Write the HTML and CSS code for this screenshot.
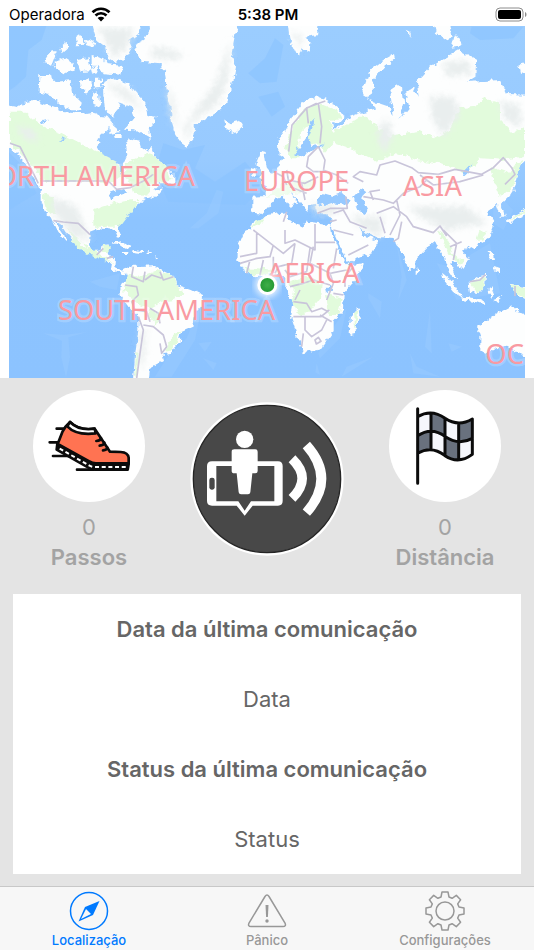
FILE: index.html
```html
<!DOCTYPE html>
<html lang="pt-BR">
<head>
    <meta charset="UTF-8">
    <meta name="viewport" content="width=device-width, initial-scale=1.0">
    <title>Localização</title>
    <link rel="stylesheet" href="styles.css">
</head>
<body>
    <header class="status-bar">
        <div class="carrier">
            <span>Operadora</span>
            <svg class="wifi" viewBox="0 0 20 15" aria-hidden="true">
                <path d="M1.5 5.2a12.2 12.2 0 0 1 17 0M4.5 8.5a7.8 7.8 0 0 1 11 0" fill="none" stroke="#000" stroke-width="2.7"/>
                <path d="M6.6 11a4.9 4.9 0 0 1 6.8 0L10 14.5z"/>
            </svg>
        </div>
        <time class="clock">5:38 PM</time>
        <svg class="battery" viewBox="0 0 32 15" aria-hidden="true">
            <rect x="1" y="1" width="27" height="13" rx="4" fill="none" stroke="#8c8c8c"/>
            <rect x="3" y="3" width="23" height="9" rx="2"/>
            <path d="M30 5c2 .7 2 4.300 0 5z" fill="#8c8c8c"/>
        </svg>
    </header>

    <main class="content">
        <section class="map-area" aria-label="Mapa">
            <svg class="map" viewBox="27 78 1548 1056">
                <defs>
                    <filter id="coast" x="0" y="0" width="100%" height="100%">
                        <feTurbulence type="fractalNoise" baseFrequency="0.06" numOctaves="2" seed="4" result="noise"/>
                        <feDisplacementMap in="SourceGraphic" in2="noise" scale="20" xChannelSelector="R" yChannelSelector="G"/>
                    </filter>
                    <filter id="soft"><feGaussianBlur stdDeviation="10"/></filter>
                    <linearGradient id="sea" x1="0" y1="0" x2="0" y2="1">
                        <stop offset="0" stop-color="#9bcdff"/>
                        <stop offset="0.38" stop-color="#98caff"/>
                        <stop offset="0.55" stop-color="#8dc4ff"/>
                        <stop offset="1" stop-color="#8cc3ff"/>
                    </linearGradient>
                    <radialGradient id="pin">
                        <stop offset="0" stop-color="#3fae49"/>
                        <stop offset="1" stop-color="#259a35"/>
                    </radialGradient>
                </defs>
                <rect x="27" y="78" width="1548" height="1056" fill="url(#sea)"/>

                <!-- sea depth -->
                <g class="deep">
                    <path d="M0 60H145L125 120 85 150 78 230 45 260 0 290zM490 430l60 20 65-15-30 70 60 40 90-60 60 70-60 60-230-10-40-90zM745 220l50-45 30-60 25 20-20 110-50 5zM775 290l60-15 20 45-40 30zM1415 80h155l-30 35-100 5-30-20zM0 430l60 60 50 90-100 60z"/>
                </g>
                <g class="shallow">
                    <path d="M130 1000l60 5 70-8-55 15 5 60-12 60-14-60 2-50zM270 845l90-25-10 50-50-10zM570 685l50-45 30-70 20 5-15 65-60 45zM595 1030l40-5-20 30zM1190 730l30 110-25 60 10-70zM1105 880l40 25-5 50-35-60zM1230 1060l20 40 70 30-80-10zM1290 930l5 130-20-20zM1345 1030l40 10-30 15zM950 1090l10 35-14-8zM640 1110l-30-35 40 15zM1040 1100l80-30-95 60z"/>
                    <path d="M500 1075l60-60 50-120-25 125-70 110h-50zM955 1060l50-85 35-50-20 90-60 60zM1310 790l40 10 120-70 30 150-130 20zM1480 570l60 60-30 60-30-20z"/>
                </g>

                <g filter="url(#coast)">
                    <g class="land">
                        <!-- North and Central America -->
                        <path d="M10 315L60 322 75 303 105 300 130 310 160 320 185 335 245 342 280 335 300 348 322 350 340 372 322 388 300 408 290 440 302 465 332 482 355 492 362 530 370 492 380 470 376 440 386 415 420 422 425 440 445 455 453 440 466 472 492 495 516 515 516 548 480 550 460 572 490 565 470 588 425 602 402 622 382 650 352 675 364 710 354 713 345 690 300 685 272 695 270 735 280 753 305 750 308 735 326 733 320 760 345 775 343 800 365 815 382 806 375 828 345 812 320 782 290 767 240 750 225 730 200 700 180 668 165 664 202 720 196 722 172 690 155 655 135 635 122 610 122 570 108 542 85 510 60 470 10 425z"/>
                        <!-- South America -->
                        <path d="M375 808L400 792 415 802 465 798 482 810 522 828 530 855 575 870 612 888 610 912 585 940 580 980 546 995 540 1020 512 1060 490 1062 495 1080 450 1105 445 1150H398L405 1070 415 990 415 950 385 920 358 880 365 850 383 840z"/>
                        <!-- Greenland and Iceland -->
                        <path d="M448 60L450 90 430 122 403 135 410 160 425 185 480 190 495 215 500 270 512 320 516 370 526 405 545 430 560 440 580 415 582 378 610 362 645 342 682 310 688 280 700 240 708 200 695 160 714 60z"/>
                        <path d="M672 360l18 10 30-8 12 16-27 24-25-12z"/>
                        <!-- Arctic archipelago -->
                        <path d="M272 60l18 60 26 20 4 32 25 14 30-10 20-36-10-20 36-24V60zM118 225l27 0 25 20 42-4 4 38 30 30-6 22-26 0-34-20-32-26-32-8zM130 190l22-36 18 0-15 40zM163 185l42-12 20 32-34 18-22-12zM228 108l12-8 16 34-26 2zM258 115l28 14-6 12-20-6zM182 140l18-16 2 24-14 12zM230 178l36-6 6 42-30 2zM275 168l40 10 6 14 46 6-6 26-50-4-12-20-24-4zM243 245l26-8 6 34-14 10-16-18zM283 236l24 0-6 28-20 2zM276 280l20-6 6 50-22-10zM272 206l18-10 6 20-20 6z"/>
                        <path d="M308 250L340 235 385 250 410 280 436 310 442 345 467 350 460 376 446 382 452 418 430 405 402 388 375 386 402 352 396 322 360 308 342 350 315 330 310 285zM330 368l32 28-34 6zM345 402l20 0 0 12-18 0zM495 528l25-10 0 36-28-4z"/>
                        <!-- Caribbean -->
                        <path d="M334 728l30-4 32 20-20 2-16-12zM398 750l34 4-8 8-28-4zM366 756h16v6h-16zM440 754h12v5h-12zM466 762l8 20-6 0z"/>
                        <!-- Europe and Asia -->
                        <path d="M833 420L851 395 881 345 911 305 951 288 981 300 1016 325 1034 350 1016 370 996 367 1001 390 1028 376 1046 352 1091 335 1131 325 1108 300 1161 318 1181 345 1171 280 1191 250 1206 260 1213 312 1200 356 1226 324 1216 280 1241 262 1256 290 1251 245 1291 200 1331 175 1376 150 1429 180 1426 230 1401 246 1501 240 1521 282 1600 285V465L1560 498 1546 560 1526 592 1505 612 1516 650 1502 650 1490 615 1461 635 1482 672 1466 715 1426 737 1388 752 1407 780 1386 808 1366 785 1351 790 1361 820 1374 842 1350 826 1331 772 1316 746 1306 725 1281 745 1246 780 1246 800 1233 814 1216 785 1206 755 1186 735 1181 714 1141 712 1101 702 1076 680 1091 706 1121 716 1134 728 1116 760 1046 786 1034 770 1001 696 991 672 996 655 985 640 951 640 948 612 925 615 918 632 897 606 872 580 890 605 872 622 848 588 826 594 806 622 785 645 757 640 757 590 797 588 797 560 780 546 806 526 830 510 846 480 858 478 836 462z"/>
                        <!-- Africa -->
                        <path d="M760 665L790 655 801 645 861 636 866 662 906 678 921 665 991 673 996 702 1016 750 1036 785 1048 797 1089 790 1071 835 1031 880 1029 930 1001 960 1001 990 961 1048 911 1060 896 1020 873 950 881 910 856 870 856 835 831 820 801 826 765 832 735 815 712 780 715 735 730 700 750 690z"/>
                        <path d="M1046 1000L1050 952 1076 925 1081 945 1062 1002 1050 1005z"/>
                        <!-- British Isles -->
                        <path d="M766 492l14-34 14 4 6 40 14 16-10 16-26 4 8-22zM752 512l14-8 2 20-14 4z"/>
                        <!-- Arctic islands -->
                        <path d="M1182 162L1150 180 1111 210 1089 270 1101 298 1118 272 1121 236 1150 202 1185 176zM863 70l6 50 26 54 10-30 24 14 2-30-12-18 32-4 6-36zM1300 70l8 28 34 26 14-20-6-34zM1365 102l22 34-32 4zM1575 186l-20 10 6 26 20-4zM1220 92l12 6 0 12z"/>
                        <!-- South East Asia and Oceania -->
                        <path d="M1406 850L1440 828 1458 824 1456 856 1438 880 1410 876zM1326 818l24 20 40 54-26-14-34-44zM1384 890l40 4 34 12-4 6-66-12zM1466 864l16-8-8 16 6 14-8 4-6-14zM1526 852l24 6 40 4v40l-30-14zM1466 754l12 2 4 22-10-2zM1482 798l18 6 0 16-16-6zM1247 802l8 16-8 4zM1518 664l30-22 40-22v20l-46 22-16 10zM1480 900l26-10-16 16z"/>
                        <path d="M1431 980L1491 940 1536 915 1556 940 1600 950V1085L1560 1062 1541 1050 1521 1040 1491 1045 1456 1064 1441 1055 1441 1010z"/>
                    </g>

                    <!-- vegetation -->
                    <g class="green">
                        <path d="M30 335L75 335 120 375 180 400 260 440 350 485 362 530 330 545 130 545 100 500 60 460 30 425zM380 490L425 470 450 460 500 500 515 540 455 555 440 590 400 580 385 540 370 530z"/>
                        <path d="M280 630L340 610 400 600 420 600 360 680 280 680zM125 580l30 10 15 55-30-10zM200 680l50 55 30 15 60 40-70-25-40-20zM310 735h16v18h-16z"/>
                        <path d="M385 815L420 830 470 810 520 828 530 855 560 880 520 900 485 905 450 925 400 905 375 870 365 880 375 845zM450 925l30 20-10 30-30-30zM520 1000l25-10-30 60-20 5zM408 1060l8 0-6 70-8 0z"/>
                        <path d="M855 450L870 400 900 340 930 320 960 310 1010 330 1025 355 990 360 1000 395 1050 370 1090 345 1125 375 1170 410 1230 400 1260 395 1300 415 1350 390 1375 325 1425 320 1450 295 1500 310 1500 360 1540 400 1575 380V470L1530 480 1440 475 1400 520 1320 490 1250 480 1190 460 1130 485 1060 450 1000 430 975 455 955 430 918 435 930 370 900 400 895 475 875 475zM1470 500l60 20 20-30 20-10-30 80-40 30-20-50z"/>
                        <path d="M1310 690l25 15 25 55 30 25-6 10-34-30-20-40zM1440 690l22 5-12 24-20 0zM1410 850l44-20 0 30-20 20zM1530 855l50 10v30l-30-15zM1520 665l60-40v12z"/>
                        <path d="M730 800l40 5 50 5-10 12-60 5zM865 850l20-10 40-15 40 30-5 40-35 45-30 5-20-45 10-30zM975 885l50 10-10 50-30 0zM1062 940l14-10-10 60zM755 680l15-20 25-5-10 15z"/>
                        <path d="M800 590l50-40 80-10 20 20-50 20z" opacity="0.5"/>
                    </g>

                    <!-- mountains -->
                    <g class="relief">
                        <path d="M290 85h110l-20 60-40 30-20-50zM460 140l90 20-20 20-80-10zM690 120l-5 110-30 80-80 55-15 60-10-40 40-60 60-80zM500 250l25 60 5 80-15-40zM330 245l60 30 40 60-40-30-60-40zM45 375l60 20 10 30-40-10z"/>
                        <path d="M1290 290l70 0 20 50-50 70-35-60zM1330 190l70-10 20 40-80 10zM1500 300l60 20 5 60-50-20zM1220 620l180 0 60 50-120 20-80-40zM1050 650l100 0-10 60-60-30zM150 590l80 30 40 100-50-10-60-70zM420 1000l20-10-10 110-12 0zM930 610l90 10-10 20-60 0zM875 90l30 20-5 40zM1160 350l20 60-30 50-20-60z"/>
                    </g>
                </g>

                <!-- inland seas and lakes -->
                <g class="water" filter="url(#coast)">
                    <path d="M950 605l20-25 30 8 25-10 24 22-10 14-40-4-25 8zM1060 590l22-24 18 8-14 24 16 34-12 10-14-12zM920 412l10-48 14 0-18 50 8 24 44-6-38 16-20 14-18 10-20-6zM1000 365l22 10-14 14zM1030 355l14-22 6 16zM1395 512l22-22-8 24-18 16zM325 578l35-12 22 12-30 10-18 14zM980 862l12-8 6 16-14 10zM170 425l26-12-6 12zM120 365l24-6-10 12z"/>
                </g>

                <!-- borders -->
                <g class="borders">
                    <path d="M122 543H325l25 25 40-5 40-20 30-20M160 662l30 4 45 4 35 34M30 430l30 10 25 50 30 60M290 765l20-20M320 775l20-5"/>
                    <path d="M400 800l-5 30 35 15 5-30M375 855l35 5 5 25-20 20 10 25 35 5 10 30M435 840l20-15 30 10M480 815l10 25 30-10M415 950l15 40-10 70-10 75M430 975l30 5 30 25 10 35-15 20-5-30M450 925l25 15 5 30"/>
                    <path d="M866 455l10-80 45-52 40-15 15-5M925 370l-5-45 30-15M955 310l10 70-5 50M925 470l30-30 20 40-5 35-30 0-20-15zM830 520l20 10 10 25M860 510l5 30 50 10 40-20M870 560l50 20M905 550l10 50M970 510l40 15 35 25"/>
                    <path d="M1090 545l-30-15 20-15 50 10 10-30 45-12 50 20 20 15 60 5 50-15 80 15 35-20 30-30 25 30 10 20-30 30M1260 525l40 30 80-10 70-20M1090 590l60 10 30 10 30-30 50-20 20-20M1120 600l-10-25 30-5M1190 600l10 45-30 60M1130 640l50-20 40 30 20 30 60 18 20-20 20 30M1140 650l15 50M1205 665l-10 50-15 10M1330 690l40 40-10 50M1350 740l35-15"/>
                    <path d="M952 640l40-15 50 0-5-35M1000 640l30-10 20 35 50 20M1000 690l60 15M1045 765l60-30M990 665l20-5"/>
                    <path d="M760 690l90 70 35-30M850 665l10-30M855 690l0 40 30-10 60 30V672M945 727h60M770 700l0 60-50 10M720 790l50-15 40-5 10-35M820 770l0 50M790 780l-10 45M750 780l-10 40M885 730l-10 60-40 10-10 20M930 745l-10 70-50 15-15-20M940 740l-10 50 60 30 50-10M1010 745l-10 60M990 820l10 30-20 50M1060 800l-25 30 0 30M870 860l40-10 30-10 50 15M900 870l-15 30M880 905l40 5 15 25 30-10 20 10M880 950l83 0 25-20M915 950v40l20 20 30-20 15-30M910 1000l-5 40M945 1020l10-8 8 12-14 8zM960 945l35 20M1000 880l30 5"/>
                    <path d="M1410 845l30-5 16-16M1545 858l0 30"/>
                </g>

                <g class="labels">
                    <text x="585" y="558" text-anchor="end">NORTH AMERICA</text>
                    <text x="732" y="572">EUROPE</text>
                    <text x="1208" y="588">ASIA</text>
                    <text x="801" y="850">AFRICA</text>
                    <text x="174" y="961">SOUTH AMERICA</text>
                    <text x="1456" y="1091">OC</text>
                </g>

                <circle cx="802" cy="855" r="36" fill="#fff" opacity="0.8" filter="url(#soft)"/>
                <circle cx="802" cy="855" r="30" fill="#fff"/>
                <circle cx="802" cy="855" r="21" fill="url(#pin)"/>
            </svg>
        </section>

        <section class="stats">
            <div class="stat">
                <svg class="stat-icon" viewBox="39 30 336 336" aria-hidden="true">
                    <circle cx="207" cy="198" r="168" fill="#fff"/>
                    <g stroke="#0b0b0b" stroke-width="8" stroke-linecap="round" stroke-linejoin="round">
                        <path d="M110 146h22M89 187h28M99 228h52M171 269h50" fill="none"/>
                        <path d="M112 191l-2 18 98 55q8 5 18 5h97l3-17H226z" fill="#0b0b0b"/>
                        <path d="M150 126q-14 12-22 28l-15 38 95 52q8 6 20 6h98v-17q-2-16-24-17l-32-1-46-69q-46 8-74-20z" fill="#ff7352"/>
                        <path d="M150 126l-8 13q26 28 85 21l-3-14q-48 7-74-20z" fill="#fff"/>
                        <path d="M229 183q13-1 14-9M239 197q13-1 14-9M249 211q12-1 13-8" fill="none"/>
                    </g>
                    <path d="M119 206l88 50q8 5 19 5h96" fill="none" stroke="#fff" stroke-width="6" stroke-dasharray="12 8"/>
                </svg>
                <span class="stat-value">0</span>
                <span class="stat-label">Passos</span>
            </div>

            <svg class="logo" viewBox="30 38 462 462" aria-hidden="true">
                <circle cx="261" cy="269" r="230" fill="#fff"/>
                <circle cx="261" cy="269" r="221" fill="#484848" stroke="#252525" stroke-width="4"/>
                <path fill-rule="evenodd" fill="#fff" d="M96 216h198q14 0 14 14v105q0 14-14 14h-76l-24 30-24-30H96q-15 0-15-14V230q0-14 15-14zM109 230v106h66l19 28 19-28h70V230z"/>
                <rect x="88" y="265" width="16" height="36" rx="7" fill="#484848"/>
                <circle cx="194" cy="150" r="26" fill="#fff"/>
                <path d="M163 180h63q7 0 7 7v58q0 7-7 7h-9l-6 57q-1 6-7 6h-21q-6 0-7-6l-6-57h-7q-8 0-8-7v-58q0-7 8-7z" fill="#fff"/>
                <path d="M336 208q61 59 0 119M379 167q90 101 0 203" fill="none" stroke="#fff" stroke-width="29"/>
            </svg>

            <div class="stat">
                <svg class="stat-icon" viewBox="57 30 336 336" aria-hidden="true">
                    <circle cx="225" cy="198" r="168" fill="#fff"/>
                    <path d="M143 110q42-24 82 5 40 27 82 2v106q-42 31-82 4-40-32-82-7z" fill="#f6f7fc"/>
                    <path d="M183 101q20 0 42 14v54q-20-14-42-14zM266 129q22 0 41-12v58q-20 10-41 10zM143 167q20-12 40-12v51q-20 0-40 14zM225 169q20 14 41 16v54q-20 0-41-12z" fill="#69717e"/>
                    <g fill="none" stroke="#0b0b0b" stroke-width="9" stroke-linecap="round" stroke-linejoin="round">
                        <path d="M143 86v224M143 110q42-24 82 5 40 27 82 2v106q-42 31-82 4-40-32-82-7M143 167q42-28 82 2 40 29 82 6M183 101v105M225 115v112M266 129v110"/>
                    </g>
                </svg>
                <span class="stat-value">0</span>
                <span class="stat-label">Distância</span>
            </div>
        </section>

        <dl class="card">
            <dt>Data da última comunicação</dt>
            <dd>Data</dd>
            <dt>Status da última comunicação</dt>
            <dd>Status</dd>
        </dl>
    </main>

    <nav class="tab-bar">
        <a class="tab active" href="#localizacao">
            <svg viewBox="0 0 40 40" aria-hidden="true">
                <circle cx="20" cy="20" r="18.5" fill="none" stroke="currentColor" stroke-width="1.500"/>
                <path d="M30.500 10L16 16 9.500 30.500 24 24z" fill="currentColor"/>
                <path d="M17 18l5 5-10 5z" fill="#f7f7f7"/>
            </svg>
            <span>Localização</span>
        </a>
        <a class="tab" href="#panico">
            <svg viewBox="0 0 40 40" aria-hidden="true">
                <path d="M18 5.500q2-3 4 0L38 32q1.500 3.500-2 3.500H4Q.5 35.500 2 32z" fill="none" stroke="currentColor" stroke-width="1.500"/>
                <path d="M18.500 14h3l-.6 12h-1.800z" fill="currentColor"/>
                <circle cx="20" cy="30" r="1.700" fill="currentColor"/>
            </svg>
            <span>Pânico</span>
        </a>
        <a class="tab" href="#configuracoes">
            <svg viewBox="-20 -20 40 40" aria-hidden="true">
                <g fill="none" stroke="currentColor" stroke-width="1.500" stroke-linejoin="round">
                    <path d="M-3-19H3L4-14 7.100-12.700 11.300-15.600 15.600-11.300 12.700-7.100 14-4 19-3V3L14 4 12.700 7.100 15.600 11.300 11.300 15.600 7.100 12.700 4 14 3 19H-3L-4 14-7.100 12.700-11.300 15.600-15.600 11.300-12.700 7.100-14 4-19 3V-3L-14-4-12.700-7.100-15.600-11.300-11.300-15.600-7.100-12.700-4-14z"/>
                    <circle r="9"/>
                </g>
            </svg>
            <span>Configurações</span>
        </a>
    </nav>
</body>
</html>
```
FILE: styles.css
```css
* {
    box-sizing: border-box;
    margin: 0;
    padding: 0;
}

body {
    background-color: #e4e4e4;
    color: #666;
    display: flex;
    flex-direction: column;
    font-family: Inter, 'Liberation Sans', sans-serif;
    min-height: 100vh;
}

svg {
    display: block;
}

/* Status bar */
.status-bar {
    align-items: center;
    background-color: #fff;
    color: #000;
    display: grid;
    font-size: 15px;
    grid-template-columns: 1fr auto 1fr;
    height: 26px;
    padding: 2px 7px 0 9px;
}

.carrier {
    align-items: center;
    display: flex;
    gap: 6px;
}

.wifi {
    height: 15px;
    width: 20px;
}

.clock {
    font-weight: 600;
}

.battery {
    height: 15px;
    justify-self: end;
    width: 32px;
}

/* Map */
.content {
    flex: 1;
}

.map-area {
    background-color: #fff;
    padding: 0 9px;
}

.map {
    height: auto;
    width: 100%;
}

.deep {
    fill: #8bc3ff;
    opacity: 0.6;
}

.shallow {
    fill: #9acbff;
    opacity: 0.5;
}

.land {
    fill: #fdfefe;
}

.green {
    fill: #e2fbdc;
}

.relief {
    fill: #e9eeee;
    filter: url(#soft);
}

.water {
    fill: #96c9ff;
}

.borders {
    fill: none;
    stroke: #c9c5da;
    stroke-linejoin: round;
    stroke-width: 5;
}

.labels {
    fill: #f99aa2;
    font-family: 'Noto Sans', 'Open Sans', sans-serif;
    font-size: 82px;
    paint-order: stroke;
    stroke: rgba(255, 255, 255, 0.2);
    stroke-width: 14;
}

/* Steps, logo and distance */
.stats {
    align-items: start;
    display: grid;
    grid-template-columns: repeat(3, 1fr);
    justify-items: center;
    padding: 12px 0 22px;
}

.stat {
    align-items: center;
    color: #a3a3a3;
    display: flex;
    flex-direction: column;
    font-size: 22px;
    line-height: 30px;
}

.stat-icon {
    height: 112px;
    margin-bottom: 10px;
    width: 112px;
}

.stat-label {
    font-weight: 600;
}

.logo {
    height: 154px;
    margin-top: 12px;
    width: 154px;
}

/* Last communication */
.card {
    background-color: #fff;
    font-size: 22px;
    line-height: 70px;
    margin: 0 13px 12px;
    text-align: center;
}

.card dt {
    font-weight: 600;
}

/* Tab bar */
.tab-bar {
    background-color: #f7f7f7;
    border-top: 1px solid #c8c8c8;
    display: grid;
    grid-template-columns: repeat(3, 1fr);
    height: 64px;
    padding-top: 4px;
}

.tab {
    align-items: center;
    color: #989898;
    display: flex;
    flex-direction: column;
    font-size: 13px;
    font-weight: 500;
    line-height: 18px;
    text-decoration: none;
}

.tab svg {
    height: 40px;
    width: 40px;
}

.tab.active {
    color: #007aff;
}
```
